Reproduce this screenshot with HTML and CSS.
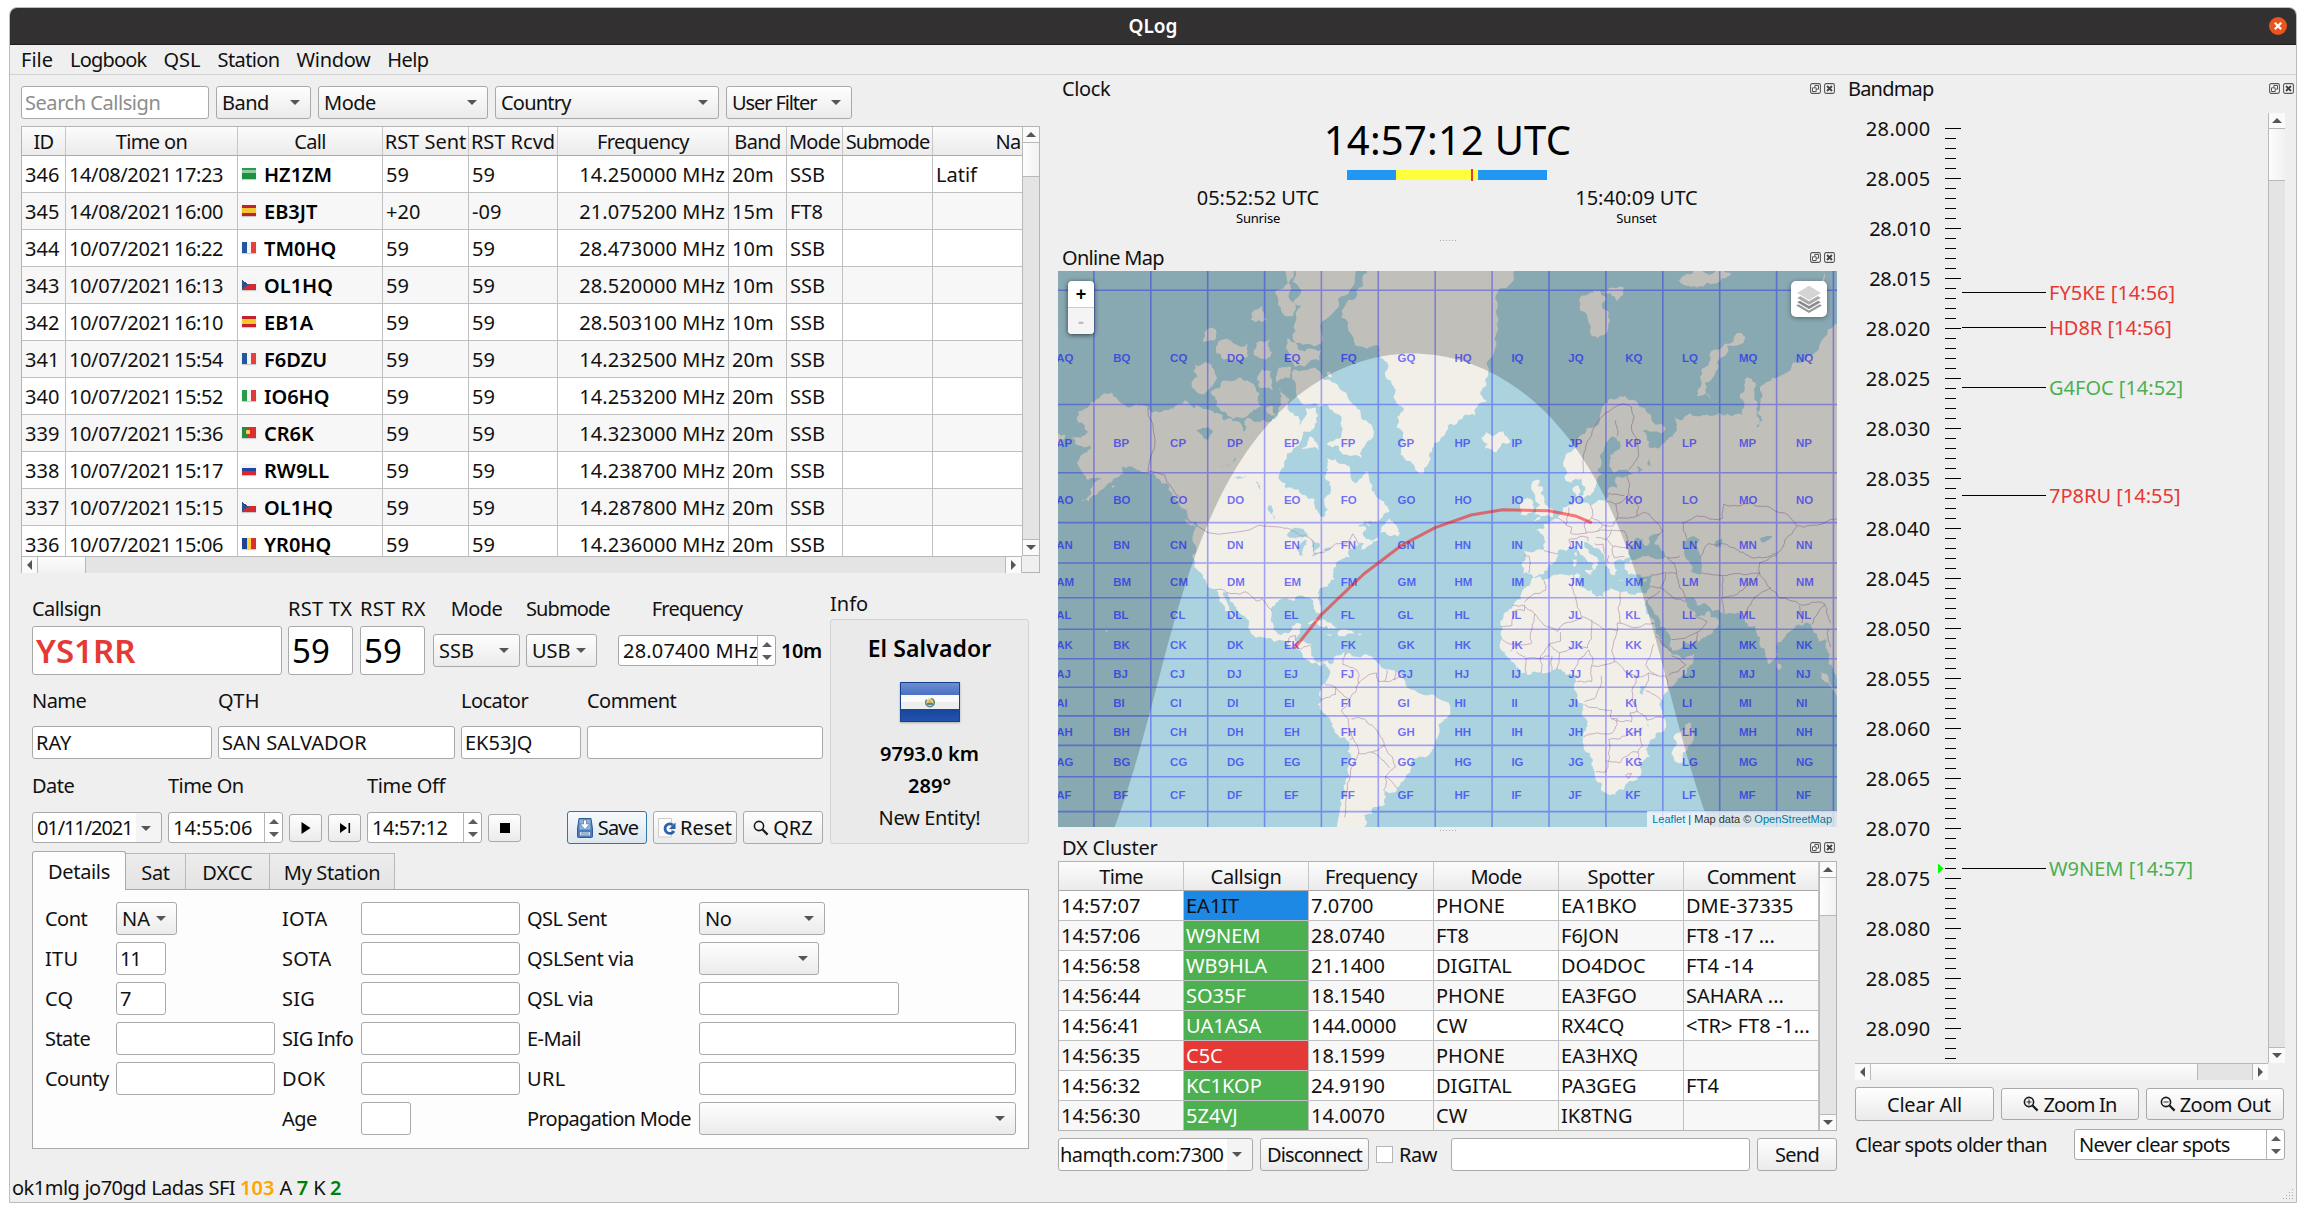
FILE: index.html
```html
<!DOCTYPE html>
<html lang="en">
<head>
<meta charset="utf-8">
<title>QLog</title>
<link rel="stylesheet" href="styles.css">
</head>
<body>
<svg class="defs" width="0" height="0">
  <symbol id="float" viewBox="0 0 11 11"><rect x=".6" y=".6" width="9.8" height="9.8" rx="1.6" fill="#fafafa" stroke="#555" stroke-width="1.1"/><path d="M4.800 2.500h3.700v3.700H6.500M4.800 2.500v2M2.500 4.800h3.700v3.700H2.500z" fill="none" stroke="#555"/></symbol>
  <symbol id="shut" viewBox="0 0 11 11"><rect x=".6" y=".6" width="9.8" height="9.8" rx="1.6" fill="#fafafa" stroke="#555" stroke-width="1.1"/><path d="M3 3l5 5M8 3l-5 5" stroke="#444" stroke-width="2"/></symbol>
  <symbol id="lens" viewBox="0 0 16 16"><circle cx="6" cy="6" r="4.6" fill="none" stroke="#1a1a1a" stroke-width="1.6"/><path d="M9.5 9.5L14.6 14.6" stroke="#1a1a1a" stroke-width="2.2"/></symbol>
</svg>
<div class="window">
  <header class="titlebar"><span>QLog</span>
    <svg class="close" viewBox="0 0 18 18"><circle cx="9" cy="9" r="9" fill="#e95420"/><path d="M5.8 5.8l6.4 6.4M12.2 5.8l-6.4 6.4" stroke="#fff" stroke-width="2.2"/></svg>
  </header>
  <nav class="menubar"><span class="s0">File</span><span class="s8">Logbook</span><span class="s0">QSL</span><span>Station</span><span class="s3">Window</span><span>Help</span></nav>

  <main class="main">
    <section class="left">
      <div class="filters">
        <div class="field hint w188">Search Callsign</div>
        <div class="combo w95">Band</div>
        <div class="combo w170">Mode</div>
        <div class="combo w224 s8">Country</div>
        <div class="combo w126 s11">User Filter</div>
      </div>

      <div class="grid log">
        <div class="view">
          <table>
            <colgroup><col style="width:44px"><col style="width:172px"><col style="width:145px"><col style="width:86px"><col style="width:89px"><col style="width:171px"><col style="width:58px"><col style="width:56px"><col style="width:90px"><col style="width:121px"></colgroup>
            <thead><tr><th>ID</th><th>Time on</th><th>Call</th><th class="s0">RST Sent</th><th class="s0">RST Rcvd</th><th>Frequency</th><th>Band</th><th>Mode</th><th class="s9">Submode</th><th class="cut">Na</th></tr></thead>
            <tbody>
              <tr><td>346</td><td class="dt">14/08/2021 17:23</td><td class="call"><i class="flag sa"></i>HZ1ZM</td><td>59</td><td>59</td><td class="num">14.250000 MHz</td><td>20m</td><td>SSB</td><td></td><td>Latif</td></tr>
              <tr><td>345</td><td class="dt">14/08/2021 16:00</td><td class="call"><i class="flag es"></i>EB3JT</td><td>+20</td><td>-09</td><td class="num">21.075200 MHz</td><td>15m</td><td>FT8</td><td></td><td></td></tr>
              <tr><td>344</td><td class="dt">10/07/2021 16:22</td><td class="call"><i class="flag fr"></i>TM0HQ</td><td>59</td><td>59</td><td class="num">28.473000 MHz</td><td>10m</td><td>SSB</td><td></td><td></td></tr>
              <tr><td>343</td><td class="dt">10/07/2021 16:13</td><td class="call"><i class="flag cz"></i>OL1HQ</td><td>59</td><td>59</td><td class="num">28.520000 MHz</td><td>10m</td><td>SSB</td><td></td><td></td></tr>
              <tr><td>342</td><td class="dt">10/07/2021 16:10</td><td class="call"><i class="flag es"></i>EB1A</td><td>59</td><td>59</td><td class="num">28.503100 MHz</td><td>10m</td><td>SSB</td><td></td><td></td></tr>
              <tr><td>341</td><td class="dt">10/07/2021 15:54</td><td class="call"><i class="flag fr"></i>F6DZU</td><td>59</td><td>59</td><td class="num">14.232500 MHz</td><td>20m</td><td>SSB</td><td></td><td></td></tr>
              <tr><td>340</td><td class="dt">10/07/2021 15:52</td><td class="call"><i class="flag it"></i>IO6HQ</td><td>59</td><td>59</td><td class="num">14.253200 MHz</td><td>20m</td><td>SSB</td><td></td><td></td></tr>
              <tr><td>339</td><td class="dt">10/07/2021 15:36</td><td class="call"><i class="flag pt"></i>CR6K</td><td>59</td><td>59</td><td class="num">14.323000 MHz</td><td>20m</td><td>SSB</td><td></td><td></td></tr>
              <tr><td>338</td><td class="dt">10/07/2021 15:17</td><td class="call"><i class="flag ru"></i>RW9LL</td><td>59</td><td>59</td><td class="num">14.238700 MHz</td><td>20m</td><td>SSB</td><td></td><td></td></tr>
              <tr><td>337</td><td class="dt">10/07/2021 15:15</td><td class="call"><i class="flag cz"></i>OL1HQ</td><td>59</td><td>59</td><td class="num">14.287800 MHz</td><td>20m</td><td>SSB</td><td></td><td></td></tr>
              <tr><td>336</td><td class="dt">10/07/2021 15:06</td><td class="call"><i class="flag ro"></i>YR0HQ</td><td>59</td><td>59</td><td class="num">14.236000 MHz</td><td>20m</td><td>SSB</td><td></td><td></td></tr>
            </tbody>
          </table>
        </div>
        <div class="sb v"><i class="btn up"></i><i class="thumb" style="height:34px"></i><i class="rest"></i><i class="btn down"></i></div>
        <div class="sb h"><i class="btn prev"></i><i class="thumb" style="width:48px"></i><i class="rest"></i><i class="btn next"></i></div>
      </div>

      <div class="contact">
        <div class="entry">
          <div class="row r1">
            <div class="cell w250"><label>Callsign</label><div class="ctl"><div class="field big red">YS1RR</div></div></div>
            <div class="cell w65"><label class="up3">RST TX</label><div class="ctl"><div class="field big">59</div></div></div>
            <div class="cell w65 g7"><label class="up3">RST RX</label><div class="ctl"><div class="field big">59</div></div></div>
            <div class="cell w87 g8 mid"><label>Mode</label><div class="ctl"><div class="combo s0">SSB</div></div></div>
            <div class="cell w86"><label class="s9">Submode</label><div class="ctl"><div class="combo w71 s0">USB</div></div></div>
            <div class="cell w158 mid"><label class="s8">Frequency</label><div class="ctl"><div class="spin freq"><span>28.07400 MHz</span></div></div></div>
            <div class="cell"><label>&nbsp;</label><div class="ctl"><b class="meters">10m</b></div></div>
          </div>
          <div class="row r2">
            <div class="cell w180"><label>Name</label><div class="field">RAY</div></div>
            <div class="cell w237"><label class="up3">QTH</label><div class="field">SAN SALVADOR</div></div>
            <div class="cell w120"><label>Locator</label><div class="field">EK53JQ</div></div>
            <div class="cell w236"><label>Comment</label><div class="field"></div></div>
          </div>
          <div class="row r3">
            <div class="cell w130"><label>Date</label><div class="ctl"><div class="combo white date s11">01/11/2021</div></div></div>
            <div class="cell w193"><label>Time On</label><div class="ctl"><div class="spin time"><span>14:55:06</span></div>
              <button class="mini"><svg width="12" height="12" viewBox="0 0 12 12"><path d="M1.500 0l9 6-9 6z"/></svg></button>
              <button class="mini"><svg width="12" height="12" viewBox="0 0 12 12"><path d="M1 1l7 5-7 5zM9.5 1h1.6v10H9.500z"/></svg></button></div></div>
            <div class="cell w154"><label class="s3">Time Off</label><div class="ctl"><div class="spin time"><span class="s5">14:57:12</span></div>
              <button class="mini"><svg width="12" height="12" viewBox="0 0 12 12"><path d="M1 1h10v10H1z"/></svg></button></div></div>
            <div class="actions">
              <button class="save w80 s8"><svg width="18" height="20" viewBox="0 0 18 20"><path d="M3 .5h12l1.500 10.500v7.500a1 1 0 0 1-1 1h-13a1 1 0 0 1-1-1V11z" fill="#4d7fc0" stroke="#2f5b96"/><rect x="3.500" y="1.500" width="11" height="10" fill="#8fb3de"/><path d="M7.500 2h3v4H14l-5 5.500L4 6h3.500z" fill="#fff" stroke="#51739c" stroke-width=".7"/><rect x="4" y="14" width="10" height="3.500" fill="#dce4ee"/><path d="M6 14v3.500M8 14v3.500M10 14v3.500M12 14v3.500" stroke="#6d87a8"/></svg>Save</button>
              <button class="w84"><svg width="18" height="20" viewBox="0 0 18 20"><path d="M.5.5h13v18.500H.5z" fill="#fbfbfb" stroke="#ccc"/><path d="M15 7a4.800 4.800 0 1 0 1 6" fill="none" stroke="#2d62ab" stroke-width="2.800"/><path d="M17.500 4.500v6.500h-6.500z" fill="#2d62ab"/></svg>Reset</button>
              <button class="w80"><svg width="16" height="16"><use href="#lens"/></svg>QRZ</button>
            </div>
          </div>
        </div>
        <div class="info">
          <label class="s0">Info</label>
          <div class="card">
            <b class="country">El Salvador</b>
            <svg class="sv" width="60" height="40" viewBox="0 0 60 40"><defs><linearGradient id="t" x1="0" y1="0" x2="0" y2="1"><stop offset="0" stop-color="#6f90d4"/><stop offset="1" stop-color="#4a70c2"/></linearGradient><linearGradient id="b" x1="0" y1="0" x2="0" y2="1"><stop offset="0" stop-color="#16459c"/><stop offset="1" stop-color="#2455ae"/></linearGradient></defs><path fill="#eee" d="M0 0h60v40H0z"/><path fill="#fafafa" d="M0 13h60v7H0z"/><path fill="url(#t)" d="M0 0h60v13H0z"/><path fill="url(#b)" d="M0 27h60v13H0z"/><circle cx="30" cy="20.500" r="4.300" fill="#d8d9a0" stroke="#5b8a6b" stroke-width="1.500" stroke-dasharray="19 5" stroke-dashoffset="-21"/><path d="M27.500 22l2.500-5 2.500 5z" fill="#e0a83c"/><path d="M27 22h6" stroke="#3b66b0" stroke-width="1.500"/><path fill="none" stroke="#153f8f" d="M.5.5h59v39H.5z"/></svg>
            <b class="km">9793.0 km</b>
            <b class="deg">289°</b>
            <span class="ent s3">New Entity!</span>
          </div>
        </div>
      </div>

      <div class="tabs"><span class="on">Details</span><span class="t2">Sat</span><span class="t3 s0">DXCC</span><span class="t4">My Station</span></div>
      <div class="pane">
        <label>Cont</label><div class="combo w61 s0">NA</div>
        <label class="up3">IOTA</label><div class="field"></div>
        <label>QSL Sent</label><div class="combo w126">No</div>
        <label class="up3">ITU</label><div class="field w50 s11">11</div>
        <label class="up3">SOTA</label><div class="field"></div>
        <label class="s3">QSLSent via</label><div class="combo w120"></div>
        <label class="up3">CQ</label><div class="field w50">7</div>
        <label class="up3">SIG</label><div class="field"></div>
        <label class="s3">QSL via</label><div class="field w200"></div>
        <label>State</label><div class="field"></div>
        <label>SIG Info</label><div class="field"></div>
        <label>E-Mail</label><div class="field"></div>
        <label>County</label><div class="field"></div>
        <label class="up3">DOK</label><div class="field"></div>
        <label class="up3">URL</label><div class="field"></div>
        <span></span><span></span>
        <label>Age</label><div class="field w50"></div>
        <label class="s7">Propagation Mode</label><div class="combo"></div>
      </div>
    </section>

    <section class="middle">
      <div class="dock"><span class="s3">Clock</span><svg width="11" height="11"><use href="#float"/></svg><svg width="11" height="11"><use href="#shut"/></svg></div>
      <div class="clock">
        <div class="now">14:57:12 UTC</div>
        <div class="daybar"><i class="n" style="width:49px"></i><i class="d" style="width:82px"></i><i class="n" style="width:69px"></i><i class="cursor"></i></div>
        <div class="suns"><div class="sun1"><span>05:52:52 UTC</span><small>Sunrise</small></div><div class="sun2"><span>15:40:09 UTC</span><small>Sunset</small></div></div>
        <i class="grip"></i>
      </div>
      <div class="dock low"><span class="s7">Online Map</span><svg width="11" height="11"><use href="#float"/></svg><svg width="11" height="11"><use href="#shut"/></svg></div>
      <div class="map">
        <svg id="map" width="779" height="556" viewBox="0 0 779 556"></svg>
        <div class="zoomer"><span>+</span><span class="off">-</span></div>
        <div class="layers"><svg width="28" height="28" viewBox="0 0 26 26"><path d="M13 12.500L25 19l-12 7L1 19z" fill="#9a9a9a"/><path d="M13 9l12 7-12 7L1 16z" fill="#8a8a8a" stroke="#fff"/><path d="M13 5l12 7-12 7L1 12z" fill="#aaa" stroke="#fff"/><path d="M13 0l12 7.500-12 7-12-7z" fill="#d4d4d4" stroke="#fff"/></svg></div>
        <div class="credit"><a>Leaflet</a> | Map data © <a>OpenStreetMap</a></div>
      </div>
      <i class="grip g2"></i>
      <div class="dock"><span class="s2">DX Cluster</span><svg width="11" height="11"><use href="#float"/></svg><svg width="11" height="11"><use href="#shut"/></svg></div>
      <div class="grid dx">
        <div class="view">
          <table>
            <colgroup><col style="width:125px"><col style="width:125px"><col style="width:125px"><col style="width:125px"><col style="width:125px"><col style="width:135px"></colgroup>
            <thead><tr><th>Time</th><th class="s3">Callsign</th><th>Frequency</th><th>Mode</th><th class="s3">Spotter</th><th>Comment</th></tr></thead>
            <tbody>
              <tr><td>14:57:07</td><td class="blue">EA1IT</td><td>7.0700</td><td>PHONE</td><td>EA1BKO</td><td>DME-37335</td></tr>
              <tr><td>14:57:06</td><td class="green">W9NEM</td><td>28.0740</td><td>FT8</td><td>F6JON</td><td>FT8 -17 ...</td></tr>
              <tr><td>14:56:58</td><td class="green">WB9HLA</td><td>21.1400</td><td>DIGITAL</td><td>DO4DOC</td><td>FT4 -14</td></tr>
              <tr><td>14:56:44</td><td class="green">SO35F</td><td>18.1540</td><td>PHONE</td><td>EA3FGO</td><td>SAHARA ...</td></tr>
              <tr><td>14:56:41</td><td class="green">UA1ASA</td><td>144.0000</td><td>CW</td><td>RX4CQ</td><td>&lt;TR&gt; FT8 -1...</td></tr>
              <tr><td>14:56:35</td><td class="redbg">C5C</td><td>18.1599</td><td>PHONE</td><td>EA3HXQ</td><td></td></tr>
              <tr><td>14:56:32</td><td class="green">KC1KOP</td><td>24.9190</td><td>DIGITAL</td><td>PA3GEG</td><td>FT4</td></tr>
              <tr><td>14:56:30</td><td class="green">5Z4VJ</td><td>14.0070</td><td>CW</td><td>IK8TNG</td><td></td></tr>
            </tbody>
          </table>
        </div>
        <div class="sb v"><i class="btn up"></i><i class="thumb" style="height:38px"></i><i class="rest"></i><i class="btn down"></i></div>
      </div>
      <div class="server">
        <div class="combo white host w195">hamqth.com:7300</div>
        <button class="w109 s9">Disconnect</button>
        <span class="check"></span><span class="raw s5">Raw</span>
        <div class="field w299"></div>
        <button class="w80 s7 send">Send</button>
      </div>
    </section>

    <section class="right">
      <div class="dock"><span class="s8">Bandmap</span><svg width="11" height="11"><use href="#float"/></svg><svg width="11" height="11"><use href="#shut"/></svg></div>
      <div class="band">
        <svg id="band" width="413" height="950" viewBox="0 0 413 950"></svg>
        <div class="sb v"><i class="btn up"></i><i class="thumb" style="height:52px"></i><i class="rest"></i><i class="btn down"></i></div>
        <div class="sb h"><i class="btn prev"></i><i class="thumb" style="width:327px"></i><i class="rest"></i><i class="btn next"></i></div>
      </div>
      <div class="zoombtns">
        <button class="tall s2">Clear All</button>
        <button class="s8"><svg width="16" height="16" viewBox="0 0 16 16"><use href="#lens"/><path d="M3.500 6h5M6 3.500v5" stroke="#333" stroke-width="1.200"/></svg>Zoom In</button>
        <button class="s5"><svg width="16" height="16" viewBox="0 0 16 16"><use href="#lens"/><path d="M3.500 6h5" stroke="#333" stroke-width="1.200"/></svg>Zoom Out</button>
      </div>
      <div class="older"><span class="s7">Clear spots older than</span><div class="spin never"><span class="s7">Never clear spots</span></div></div>
    </section>
  </main>
  <footer class="status"><span>ok1mlg</span> <span>jo70gd</span> <span>Ladas</span> <span>SFI</span> <b class="or">103</b> <span>A</span> <b class="gr">7</b> <span>K</span> <b class="gr">2</b>
    <svg class="size" width="11" height="11" viewBox="0 0 11 11"><path d="M9 0h1v1H9zM6 3h1v1H6zM9 3h1v1H9zM3 6h1v1H3zM6 6h1v1H6zM9 6h1v1H9zM0 9h1v1H0zM3 9h1v1H3zM6 9h1v1H6zM9 9h1v1H9z" fill="#aaa"/></svg>
  </footer>
</div>
<script src="script.js"></script>
</body>
</html>
```
FILE: styles.css
```css
* { box-sizing: border-box; }
body { margin: 0; background: #fff; font-family: "Noto Sans", "Open Sans", sans-serif; font-size: 20px; line-height: 27px; color: #111; }
.defs { position: absolute; }
i { font-style: normal; display: block; }
svg { display: block; flex: none; }
button { font: inherit; color: inherit; padding: 0; }
b { font-weight: 600; color: #000; }

.window { width: 2288px; height: 1196px; margin: 7px 9px; border: 1px solid #bcbcbc; border-radius: 8px 8px 0 0; background: #efefef; overflow: hidden; display: flex; flex-direction: column; }
.titlebar { height: 37px; flex: none; background: #333031; border-bottom: 1px solid #1f1e1e; color: #fff; font-weight: 600; font-size: 19px; display: flex; align-items: center; justify-content: center; position: relative; }
.close { position: absolute; right: 9px; top: 9px; width: 18px; height: 18px; }
.menubar { height: 30px; flex: none; border-bottom: 1px solid #d3d3d3; padding: 1px 0 0 11px; display: flex; gap: 17px; letter-spacing: -.6px; }

.main { display: flex; height: 1088px; flex: none; }
.left { width: 1048px; padding: 11px 0 0 11px; flex: none; }
.middle { width: 779px; flex: none; }
.right { width: 459px; flex: none; }

.field, .combo, .spin, button { height: 33px; border: 1px solid #a9a9a9; border-radius: 3px; background: #fff; line-height: 31px; white-space: nowrap; overflow: hidden; }
.field { padding-left: 3px; }
.hint { color: #8c8c8c; letter-spacing: -.45px; }
.combo { position: relative; padding-left: 5px; background: linear-gradient(#fefefe, #ebebeb); letter-spacing: -.5px; }
.combo::after { content: ""; position: absolute; right: 10px; top: 13px; border: 5px solid transparent; border-top: 5px solid #555; border-bottom: 0; }
.combo.white { background: linear-gradient(90deg, #fff calc(100% - 25px), #f4f4f4 calc(100% - 25px)); }
button { display: flex; align-items: center; justify-content: center; background: linear-gradient(#fefefe, #ebebeb); gap: 4px; }
.spin { position: relative; height: 31px; line-height: 29px; padding-left: 4px; display: flex; }
.spin span { overflow: hidden; flex: 1; }
.spin::after { content: ""; width: 17px; border-left: 1px solid #b5b5b5; }
.spin::before { content: ""; position: absolute; right: 3px; top: 6px; width: 10px; height: 18px; background: #5c5c5c; clip-path: polygon(50% 0, 100% 28%, 0 28%, 50% 0, 50% 0, 50% 100%, 0 72%, 100% 72%, 50% 100%); }

.w188 { width: 188px; } .w95 { width: 95px; } .w170 { width: 170px; } .w224 { width: 224px; } .w126 { width: 126px; }
.w250 { width: 250px; } .w65 { width: 65px; } .w87 { width: 87px; } .w86 { width: 86px; } .w71 { width: 71px; } .w158 { width: 158px; }
.w180 { width: 180px; } .w237 { width: 237px; } .w120 { width: 120px; } .w236 { width: 236px; } .w130 { width: 130px; } .w193 { width: 193px; }
.w154 { width: 154px; } .w80 { width: 80px; } .w84 { width: 84px; } .w61 { width: 61px; } .w50 { width: 50px; } .w200 { width: 200px; }
.w195 { width: 195px; } .w109 { width: 109px; } .w299 { width: 299px; }

.filters { display: flex; gap: 7px; }

.grid { border: 1px solid #b4b4b4; background: #fff; display: grid; grid-template-columns: 1fr 17px; }
.log { width: 1019px; height: 447px; margin-top: 7px; grid-template-rows: 1fr 17px; background: #efefef; }
.dx { width: 779px; height: 270px; grid-template-rows: 1fr; }
.view { overflow: hidden; min-height: 0; min-width: 0; }
table { border-collapse: separate; border-spacing: 0; table-layout: fixed; width: 100%; }
.log table { width: 1032px; }
.dx table { width: 760px; }
th { height: 29px; padding: 1px 0 0; font-weight: 400; line-height: 27px; background: linear-gradient(#fcfcfc, #ebebeb); border-right: 1px solid #c6c6c6; border-bottom: 1px solid #aaa; white-space: nowrap; letter-spacing: -.65px; }
td { padding: 0 0 0 3px; border-right: 1px solid #c0c0c0; border-bottom: 1px solid #c0c0c0; white-space: nowrap; overflow: hidden; background: #fff; }
.log td { height: 37px; line-height: 34px; padding-top: 2px; }
.dx td { height: 30px; line-height: 29px; padding-left: 2px; }
tr:nth-child(even) td { background: #f7f7f7; }
.log .num { text-align: right; padding-right: 3px; letter-spacing: .1px; }
.dt { letter-spacing: -.38px; word-spacing: -2.5px; }
.cut { padding-left: 30px; }
.call { font-weight: 600; color: #000; }
.flag { display: inline-block; width: 14px; height: 11px; margin: 0 8px 0 1px; vertical-align: 3px; box-shadow: 0 1px 1px #ccc; }
.sa { background: linear-gradient(#2a9a4c 2px, #8fcea0 2px 5px, #1f8f42 5px); }
.es { background: linear-gradient(#c4202c 3px, #f6c630 3px 8px, #c4202c 8px); }
.fr { background: linear-gradient(90deg, #2357a0 5px, #f4f4f4 5px 9px, #e5403c 9px); }
.it { background: linear-gradient(90deg, #2a9a4c 5px, #f4f4f4 5px 9px, #dd3a3a 9px); }
.ro { background: linear-gradient(90deg, #1f3f9a 5px, #f7d33c 5px 9px, #d9302f 9px); }
.pt { background: radial-gradient(circle at 6px 5px, #f3d648 2px, transparent 2.5px), linear-gradient(90deg, #2a8a42 6px, #d9302f 6px); }
.ru { background: linear-gradient(#f4f4f4 4px, #2146a8 4px 7px, #d82a2a 7px); }
.cz { background: conic-gradient(from 238deg at 7px 5.5px, #2c4f8f 64deg, transparent 0), linear-gradient(#f4f4f4 5px, #d22a30 5px); }
.dx tr td.blue { background: #1e88e5; }
.dx tr td.green { background: #4caf50; color: #fff; }
.dx tr td.redbg { background: #e53935; color: #fff; }

.sb { display: flex; background: #e4e4e4; }
.sb.v { flex-direction: column; border-left: 1px solid #b8b8b8; }
.sb.h { border-top: 1px solid #b8b8b8; }
.log .sb.h { border-right: 1px solid #b8b8b8; }
.log .sb.v { border-bottom: 1px solid #b8b8b8; height: 429px; }
.sb .rest { flex: 1; }
.sb .thumb { background: linear-gradient(90deg, #fdfdfd, #f1f1f1); flex: none; }
.sb.v .thumb { border-bottom: 1px solid #b8b8b8; }
.sb.h .thumb { border-right: 1px solid #b8b8b8; background: linear-gradient(#fdfdfd, #f1f1f1); }
.sb .btn { width: 16px; height: 16px; background: #fafafa; display: flex; align-items: center; justify-content: center; flex: none; }
.sb .up { border-bottom: 1px solid #b8b8b8; }
.sb .down { border-top: 1px solid #b8b8b8; }
.sb .prev { border-right: 1px solid #b8b8b8; }
.sb .next { border-left: 1px solid #b8b8b8; }
.btn::after { content: ""; border: 5px solid transparent; }
.up::after { border-top: 0; border-bottom-color: #555; }
.down::after { border-bottom: 0; border-top-color: #555; }
.prev::after { border-left: 0; border-right-color: #555; }
.next::after { border-right: 0; border-left-color: #555; }

.contact { display: flex; padding-left: 11px; height: 278px; }
.entry { width: 798px; padding-top: 22px; }
.row { display: flex; gap: 6px; }
.cell { display: flex; flex-direction: column; }
.mid label { text-align: center; }
.cell label { white-space: nowrap; }
label { letter-spacing: -.55px; }
.ctl { display: flex; align-items: center; gap: 6px; }
.r1 .ctl { height: 49px; margin-top: 4px; }
.r1 .combo:not(.w71), .r1 .big { width: 100%; }
.g7 { margin-left: 1px; } .g8 { margin-left: 2px; }
.big { height: 49px; line-height: 47px; font-size: 33px; color: #000; }
.red { color: #e53935; font-weight: 600; }
.freq { width: 158px; letter-spacing: .2px; }
.meters { margin-left: -1px; letter-spacing: -.4px; }
.r2 { margin-top: 12px; }
.r2 .field { margin-top: 12px; }
.r3 { margin-top: 13px; }
.r3 .ctl { margin-top: 12px; height: 33px; }
.date { width: 130px; height: 31px; line-height: 29px; padding-left: 4px; }
.time { width: 115px; }
.mini { width: 33px; height: 28px; flex: none; }
.actions { display: flex; gap: 6px; align-items: flex-end; margin-left: 40px; }
.save { border-color: #2f77a8; background: linear-gradient(#f6fafd, #dde6ee); }
.info { width: 199px; padding-top: 17px; }
.info label { display: block; padding-left: 0; }
.card { margin-top: 2px; height: 225px; border: 1px solid #d2d2d2; border-radius: 3px; background: #eaeaea; display: flex; flex-direction: column; align-items: center; }
.country { font-size: 23px; margin-top: 15px; letter-spacing: .1px; }
.sv { margin-top: 20px; box-shadow: 0 1px 2px #aaa; }
.km { margin-top: 18px; } .deg, .ent { margin-top: 5px; }

.tabs { display: flex; align-items: flex-end; padding-left: 11px; height: 38px; letter-spacing: -.35px; }
.tabs span { height: 36px; line-height: 37px; text-align: center; border: 1px solid #b9b9b9; border-left: 0; border-bottom: 0; background: linear-gradient(#ececec, #e4e4e4); }
.tabs .on { width: 94px; height: 39px; line-height: 39px; margin-bottom: -1px; background: #fdfdfd; border: 1px solid #a9a9a9; border-bottom: 0; border-radius: 3px 3px 0 0; position: relative; }
.t2 { width: 60px; } .t3 { width: 84px; } .t4 { width: 125px; }
.pane { margin-left: 11px; width: 997px; height: 260px; border: 1px solid #a9a9a9; background: #fdfdfd; padding: 12px; display: grid; grid-template-columns: 71px 166px 79px 166px 172px 317px; grid-template-rows: repeat(6, 33px); row-gap: 7px; align-items: center; }
.pane label { white-space: nowrap; }
.pane > :nth-child(6n+2):not(.w61):not(.w50), .pane > :nth-child(6n+4):not(.w50) { width: 159px; }

.dock { height: 27px; display: flex; align-items: center; gap: 3px; padding: 0 2px 0 4px; letter-spacing: -.5px; }
.dock span { flex: 1; }
.low { height: 28px; padding-top: 1px; }
.clock { height: 141px; padding-top: 11px; position: relative; }
.now { font-size: 40px; line-height: 54px; text-align: center; color: #000; letter-spacing: .2px; }
.daybar { display: flex; width: 200px; height: 10px; margin: 3px 0 0 289px; position: relative; }
.n { background: #2196f3; } .d { background: #ffff3d; }
.cursor { position: absolute; left: 124px; top: -1px; width: 2px; height: 12px; background: #e53935; }
.suns { display: flex; margin-top: 4px; }
.suns div { display: flex; flex-direction: column; align-items: center; width: 400px; }
.suns .sun2 { width: 357px; }
.suns small { font-size: 13px; line-height: 18px; margin-top: -2px; color: #000; letter-spacing: -.2px; }
.grip { width: 17px; height: 1px; background: repeating-linear-gradient(90deg, #aaa 0 1px, transparent 1px 3px); position: absolute; left: 382px; top: 138px; }
.grip.g2 { position: static; margin: 3px 0 3px 382px; }
.map { width: 779px; height: 556px; position: relative; overflow: hidden; }
.zoomer { position: absolute; left: 10px; top: 10px; width: 26px; height: 53px; background: #fff; border-radius: 4px; box-shadow: 0 1px 5px rgba(0,0,0,.65); font: 700 18px/26px "Liberation Sans", Arial, sans-serif; text-align: center; color: #000; overflow: hidden; }
.zoomer span { display: block; height: 27px; border-bottom: 1px solid #ccc; }
.zoomer .off { background: #f4f4f4; color: #bbb; border: 0; line-height: 28px; }
.layers { position: absolute; left: 733px; top: 10px; width: 36px; height: 36px; border-radius: 5px; background: #fff; box-shadow: 0 1px 5px rgba(0,0,0,.4); padding: 4px; }
.credit { position: absolute; right: 0; bottom: 0; height: 16px; padding: 0 5px; background: rgba(255,255,255,.7); font: 11px/16px "Liberation Sans", Arial, sans-serif; color: #333; white-space: nowrap; }
.credit a { color: #0078a8; }
.server { display: flex; margin-top: 7px; align-items: center; }
.host { padding-left: 1px; }
.server button { margin-left: 7px; }
.check { width: 17px; height: 17px; border: 1px solid #b5b5b5; background: #fff; margin-left: 7px; }
.raw { width: 58px; padding: 0 0 0 6px; }

.right .dock { padding: 0 2px 0 11px; }
.band { margin: 11px 0 0 18px; width: 430px; display: grid; grid-template-columns: 413px 17px; grid-template-rows: 950px 17px; }
.zoombtns { display: flex; gap: 7px; margin: 7px 0 0 18px; align-items: center; }
.zoombtns button { width: 138px; height: 32px; }
.zoombtns .tall { width: 139px; height: 34px; }
.older { display: flex; margin: 8px 0 0 18px; align-items: center; width: 430px; justify-content: space-between; }
.never { width: 211px; }

.status { padding-left: 2px; margin-top: 11px; height: 27px; position: relative; letter-spacing: -.5px; word-spacing: .3px; }
.status b { letter-spacing: 0; }
.or { color: #ffa500; } .gr { color: #008000; }
.size { position: absolute; right: 2px; bottom: 1px; }

/* tracking */
.s0 { letter-spacing: 0; } .s2 { letter-spacing: -.2px; } .s3 { letter-spacing: -.35px; } .s5 { letter-spacing: -.5px; }
.s7 { letter-spacing: -.7px; } .s8 { letter-spacing: -.8px; } .s9 { letter-spacing: -.9px; } .s11 { letter-spacing: -1.1px; }
.up3 { letter-spacing: .3px; }
```
FILE: script.js
```js
const NS = 'http://www.w3.org/2000/svg';
function add(parent, name, attrs, text) {
  const e = document.createElementNS(NS, name);
  for (const k in attrs) e.setAttribute(k, attrs[k]);
  if (text !== undefined) e.textContent = text;
  parent.appendChild(e);
  return e;
}

// Web Mercator at zoom 2 (1024 px for the whole world)
const R = 1024 / (2 * Math.PI);
const px = lon => 491 + lon * 1024 / 360;
const py = lat => 416.3 - R * Math.log(Math.tan(Math.PI / 4 + lat * Math.PI / 360));
const parse = s => s.trim().split(/\s+/).map(p => p.split(',').map(Number)).map(([a, b]) => [px(a), py(b)]);

let seed = 7;
const rnd = () => (seed = (seed * 16807) % 2147483647) / 2147483647 - 0.5;
// roughen a coastline by midpoint displacement
function rough(pts, closed, k) {
  const out = [];
  const split = (a, b, d) => {
    const dx = b[0] - a[0], dy = b[1] - a[1], l = Math.hypot(dx, dy);
    if (d === 0 || l < 3) return;
    const r = rnd() * k, m = [(a[0] + b[0]) / 2 - dy * r, (a[1] + b[1]) / 2 + dx * r];
    split(a, m, d - 1); out.push(m); split(m, b, d - 1);
  };
  pts.forEach((p, i) => {
    out.push(p);
    if (i < pts.length - 1) split(p, pts[i + 1], 3);
    else if (closed) split(p, pts[0], 3);
  });
  return 'M' + out.map(p => p[0].toFixed(1) + ' ' + p[1].toFixed(1)).join('L') + (closed ? 'Z' : '');
}

const land = [
  // the Americas
  `-166,68.3 -163,69.5 -161,70.3 -156.5,71.3 -152,70.8 -145,70 -141,69.6 -137,69 -135,69.3 -133,69.5 -129,70 -128,70.5 -125,69.5 -124,70 -120,69.4 -115,68.8 -114,68 -110,67.9 -108,67.4 -107.5,66.5 -107,68 -103,67.8 -98,67.8 -96,68.2 -95.5,69 -94,70 -95,71.9 -92.5,71 -92,69.7 -90,69 -88,68.5 -87.5,67.3 -86,68.3 -85.5,69.6 -82,69.6 -81.3,68.5 -82.5,67 -84,66.4 -86.5,66.4 -87,65.3 -90,64 -93,62 -94.5,60 -94.6,58.7 -92.5,57 -90,57 -87,56 -85,55.3 -82.3,55 -82.2,53 -80.5,51.5 -79,51.3 -79,54.5 -77,56 -76.7,57.5 -78.5,58.8 -77.5,60.5 -78,62.4 -75,62.3 -72,61.5 -70,61 -69.5,58.9 -67.5,58.2 -65.5,59.5 -64.5,60.3 -62.5,58 -61,55.8 -58,54.5 -56,52.5 -58.5,51.3 -60.5,50.2 -65,50.2 -67,49.3 -70,47 -68,48.5 -65,49.2 -64.3,48.3 -65.5,47.5 -64.5,46.2 -62,45.8 -60,46.8 -60,45.8 -63.5,44.5 -66,43.5 -65,45.2 -67,44.8 -70,43.7 -70.7,42.5 -70,41.7 -72,41.2 -74,40.6 -74.8,39 -76,37 -75.6,35.3 -77.5,34.2 -79.5,33 -81.3,31.5 -81.2,29.5 -80,27 -80.3,25.3 -81.2,25.2 -82.6,27.5 -82.8,29 -84.2,30 -86,30.3 -89,30.3 -89.3,29.1 -91.5,29.4 -94,29.6 -96,28.5 -97.3,27.3 -97.5,25 -97.8,22.5 -97,20 -95.5,18.6 -94,18.1 -92,18.6 -90.7,19.5 -90.4,21 -87,21.6 -87.6,19.5 -88.2,18 -88.9,15.9 -86,15.9 -83.2,15 -83.6,12.5 -83.6,11 -82,9 -80,9.2 -78,9.5 -76.8,8 -75.6,10.5 -74.8,11.1 -73,11.4 -71.7,12.4 -71.5,11 -70,12 -68.3,10.8 -66,10.5 -62,10.7 -61,9.5 -60,8.5 -57.5,6.3 -54,5.9 -52,4.8 -50.5,2 -50,0 -48,-0.8 -44.5,-2.5 -40,-2.9 -37,-4.8 -35.2,-5.5 -34.8,-8 -37,-11.2 -38.9,-13.5 -39.2,-17.5 -40.5,-21 -42,-23 -45,-23.8 -48.5,-26 -48.7,-28.5 -51,-31 -53.5,-34 -56,-34.9 -58.2,-34 -57.2,-36 -57.6,-38.1 -62,-39 -62.3,-40.8 -65,-41 -64,-43 -66,-45 -74,-45 -73.8,-41 -73.5,-37 -71.5,-32 -70.6,-27 -70.3,-20 -71.5,-17.5 -76,-14 -78.5,-9.5 -81.2,-6 -80.3,-3.5 -80.8,-2 -80,0.5 -77.5,3.5 -77.8,7 -79.5,8.9 -80.3,7.4 -83,8.3 -85.7,10 -87.5,12.9 -91.5,14 -94,16.2 -96.5,15.7 -101.5,17.6 -105.3,19.8 -105.5,22 -109,25.5 -112.3,29 -114.6,31.6 -112.5,27.5 -109.5,23.1 -112.2,25 -114.5,27.8 -115.8,30.3 -117.2,32.7 -120.5,34.5 -122.4,37.3 -124.3,40.4 -124,44 -124.6,48.3 -122.8,49 -127,51 -130,54.5 -134,58 -138,59 -141,60 -146,60.8 -150,61 -149.5,59.8 -153,59 -156,57.5 -160,55.8 -164.5,54.7 -161,56 -157.5,58.7 -162,58.7 -164,60 -166,61.7 -164.5,63 -161,64 -161,64.8 -166,64.5 -168,65.6 -162,66.4`,
  // Europe, Asia and Africa
  `25,71 31,70.3 41,67 40,66.3 34,66.7 33,66.5 35,64.3 38,64 40.5,64.8 44,66.2 44,68.5 46,68 54,68.7 60,69 61,68.7 68,68.7 67,71 69.5,73 72.5,72.5 72.8,69.5 73,67 75,68 74,70 75,72.2 80,73 86,74.5 95,76 104,77.7 115,77.7 115,8 104,1 101,3 100,6.5 98.4,8 98.7,11 97.5,16.5 95,15.8 94.2,18.5 92,21.5 90,22 87,21.4 85,19.5 82.3,16.7 80.2,15.5 80.2,13 79.8,10.3 77.5,8.1 76,11 74,15 72.8,19 72.7,21 70,21 69,22.3 68,23.7 66.5,25.3 61.5,25.1 57.3,25.8 56.5,27.1 52,27.7 50,30.1 48,30 48.5,28 50.2,26 51.5,25.3 51.3,24.3 54.5,24.3 56.3,26 56.8,24 59.8,22.4 57.7,19 55,17.2 52,15.6 45,12.8 43.4,12.7 42.7,16 39.1,21 37,25 35,28 34.8,29.5 34.2,27.8 32.6,29.9 34,26.5 35.5,24 37.2,21 37.3,19 39.5,15.5 43,12.5 43.3,11.5 51.2,11.8 50.8,9.5 48,4.5 44,1 41.5,-1.7 39.3,-4.7 39.4,-7.5 40.6,-11 40.6,-15 37,-17.8 34.8,-20 35.5,-23.8 32.8,-25.8 32.5,-28.5 30,-31.3 26,-33.9 20,-34.8 18.3,-34 18.2,-31.7 15.5,-27.5 14.4,-22.5 11.8,-17.5 13.6,-12 12.2,-6 9,-1 9.6,2 9.5,3.8 8.5,4.6 6,4.3 4.3,6.3 1,6 -2,4.8 -4,5.2 -7.6,4.4 -11.5,6.9 -13.3,9 -15,11 -16.8,13 -17.4,14.7 -16.3,17 -16.3,20 -17,21 -16,24 -14,26.5 -12.5,28 -10,29.5 -9.6,31.5 -7,33.6 -5.9,35.8 -2,35.1 1,36.5 5,36.8 10,37.3 11,36.8 10.3,34.2 15,32.3 19,30.3 20,32 22,32.8 25,31.6 29,30.9 31.5,31.5 34,31.2 35.8,35 36,36.8 32.5,36.1 30.5,36.8 28,36.8 26.5,38.5 26.5,40 29,41 31.5,41.2 35,42 38,41 41.5,41.6 39,44 37,45 39,47.2 35,46.3 35.5,45.2 33.7,44.4 32.8,45.5 33,46.2 30.8,46.5 28.8,44.5 27.8,42.5 28.5,41.3 26,40.7 23,40.4 24,38 22.8,36.5 21.3,37.5 19.4,41 19.4,41.9 15.5,44 13.7,45.1 12.3,45.3 12.5,44 14.5,42.3 16,41.8 18.4,40 16.8,40.4 16.5,38.5 15.7,38 15.7,40 12.5,41.5 10.3,43.3 8.8,44.4 6,43.1 3.3,43.3 3.2,42 0,39.8 -0.5,38 -2.2,36.8 -5.5,36 -6.5,37 -9,37 -9.3,39 -8.8,43.2 -2,43.4 -1.2,45.5 -2.2,47.2 -4.7,48.3 -1.5,48.7 -1.6,49.7 0.2,49.6 1.7,50.8 4,51.8 5,53.3 8.3,53.7 8.2,57 10.5,57.6 10.3,56 10,54.8 12.5,54.3 14.2,54 18.5,54.8 20,54.7 21,56 21.7,57.4 24,57.2 23.5,59.2 28,59.6 29.8,60 23,60 21.3,61 21.5,63 25,65 22.3,65.8 17.8,62.8 17.2,60.7 18.8,59.8 16.5,57.5 14.5,55.7 12.8,55.5 11.3,59 8,58.1 5.5,59 5,61.8 10,64 13.5,67 19,69.8`,
  // Greenland
  `-73,78.2 -68,76 -60,76 -57,74.5 -54.5,72 -54,70.5 -51,69.5 -53.5,67 -52,64.5 -50,62 -47,60.5 -44,59.9 -42.5,61.5 -40.5,64.8 -37,65.8 -32,68 -26,68.6 -22,70.3 -24,71.5 -21.8,73 -20,75 -18.5,77 -19,79.5 -12,81.5 -20,84 -35,86 -60,84 -64,81 -68,79.5`,
  // Arctic islands
  `-90,73.7 -85,73.7 -81,73.7 -77,72.7 -71,71.2 -67.5,69.5 -62,67 -64,65 -66,62.5 -70,62.8 -74,64.4 -78,64.5 -73.5,65.5 -73,68 -78,70 -84,70 -89,71.5`,
  `-117,70 -113,68.6 -105,69 -101,69.6 -105,72.5 -109,73 -114,72.7 -119,71.5`,
  `-125.5,72 -121,71.3 -117,73.2 -121,74.5 -124.5,74.3`,
  `-90,76.5 -80,76.2 -76,78.5 -70,80 -62,82.4 -64,84.5 -90,84.5 -92,80.5 -87,79`,
  `-92,76.6 -88,75.6 -80,75.6 -80,74.6 -91.5,74.8`,
  `-96,80 -90,81.2 -87,80 -90,78.3 -95,79`,
  `-117,75.3 -111,74.6 -106,75 -106,76.2 -116,76.4`,
  `-104,75.2 -98,75 -98,76.5 -103,76.2`,
  `-102,72 -97,71.7 -97,73.8 -101,73.8`, `-95.5,72.5 -91,73 -90.5,74 -95,74`,
  `-87,64 -81,63.8 -84,65.8`, `-122,76.2 -117,76.6 -118,77.4`, `-105,78 -99,78 -101,79`,
  `-79,73.7 -76.5,73 -77,73.6`, `-99.5,69.4 -96,68.8 -97,69.8`,
  // other islands
  `-59.3,47.7 -56,46.9 -53,46.7 -53,48.5 -56,51.4 -57.5,50.3`,
  `-128,50.8 -125,50 -123.5,48.4 -126,49.3`, `-64.5,49.9 -62,49.2 -63.5,49.3`,
  `-84.9,21.9 -82.5,23.1 -80,23 -75.5,21 -74.2,20.2 -77.6,19.9 -78.3,21.2 -82,22.4`,
  `-74.4,18.4 -73.2,19.9 -69.5,19.6 -68.4,18.6 -71.5,17.7`, `-78.3,18.4 -76.3,18.2 -77.3,17.8`, `-67.2,18.4 -65.7,18.3 -67,18`,
  `-24,65.6 -22,66.4 -20,65.8 -16,66.5 -13.6,65 -18.5,63.4 -22.5,63.9 -21.5,64.6`,
  `11,79.6 18,80 19,78.8 21,78.5 17,76.6 14,77.8`, `18,79.8 26,80.2 24,79.3`, `45,80.6 50,80.2 58,80.4 64,81 52,81.2`,
  `52,71 57,70.7 55,72.5 59,74.5 69,76.7 66,77 57,75.5 53,73`, `91,80 97,80.5 96,81.2`,
  `-5.5,50.1 1.3,51.2 1.7,52.7 0.2,53.2 -1.5,55 -2.2,57.5 -4,57.6 -3.2,58.6 -5,58.6 -6,56.7 -4.8,54.8 -3,54 -4.5,53.2 -5,51.8 -3,51.4`,
  `-10,51.7 -6.2,52.2 -5.6,54.6 -7.5,55.3 -10,54.2`,
  `12.5,38 15.6,38.2 15.1,36.7`, `8.2,41 9.7,41 9.5,39.2 8.5,39`, `8.6,42.5 9.5,43 9.4,41.5`, `23.6,35.5 26.3,35.2 24.8,35`, `32.4,35 34.5,35.6 33.5,34.7`,
  `49.3,-12.1 50.4,-15.5 47.2,-25 45,-25.5 43.3,-22 44.4,-16.3 47.5,-14.8`, `80,9.7 81.8,7.5 80.5,6 79.8,7.5`,
  `95.3,5.6 98,4.2 103,-1 101,-3 98.5,1.5`, `-180,69 -175,67 -170,66 -172.5,64.5 -180,65`,
  `-155.8,20.1 -155,19.4 -155.8,19`, `-153.5,57.8 -152.3,57.6 -154,57`, `11,55.6 12.5,56 12,55`
];
const lakes = [
  `47.5,45.5 51,47 53,46 51,44.5 53.5,41.5 53.8,37 50,37.5 49.3,40.5 47.5,43`, `58.5,45.5 61,46.3 60.5,44 58.6,44`,
  `-92,46.8 -88.5,48.8 -84.7,47 -87.5,46.6`, `-87.8,42 -87.8,44.5 -85,45.9 -86.3,44 -86.5,42`, `-84,46 -80.5,45 -82.2,43.1 -83.5,44.3`,
  `-83.4,41.7 -79,42.8 -81,42.6`, `-79.6,43.3 -76.5,44 -77,43.4`, `-98.8,53.5 -97,51.5 -96.5,50.5 -97.5,53.7`,
  `-116,61.2 -109.5,62.7 -113,61.2`, `-124,66.6 -118,66.5 -120,65.2`, `32,0.3 34,0.3 33,-2.5 31.8,-2`, `31,61.2 33,60.6 31.5,60`, `35,62.5 36,61 34.5,61.5`,
  `34.3,-10 34.9,-14 34.3,-12`, `29.2,-3.5 30,-6 31,-8.5 29.5,-6`, `-103,58.5 -101.5,56.5 -102,58`, `-111,59.2 -106,59.5 -108,59`, `74,46.3 78.5,46.7 75,45.2`
];
const borders = [
  `-123,49 -95,49 -89.5,48 -84.5,46.5 -82.5,45.3 -82.5,42.5 -79,42.8 -76.3,44.2 -75,45 -71.5,45 -69,47.4 -67,45`,
  `-117,32.5 -111,31.3 -106.5,31.8 -103,29 -101,29.7 -97.2,26`, `-141,69.6 -141,60.3 -135,59.5 -130,55.5`, `-92,14.5 -91,17.5 -89,17.8 -89,16`, `-87.5,13 -83.5,15`,
  `-71.7,12 -72.5,8 -67.5,6 -67,1.5 -70,-4 -73,-8 -70.5,-11 -69,-17.5 -67,-23 -70,-30 -71.5,-38 -71.8,-41.5`,
  `-67,1.2 -64,4 -60.5,5 -60,2 -56,2 -52,4.5`, `-57,6 -58,2`, `-54,5.8 -54.5,2.5`, `-79,1.3 -75,0 -75,-2.5 -80,-4.4`, `-75,0 -70,-4`, `-69.5,-11 -65,-11 -60,-16 -58,-20 -62.5,-22.2 -67,-22.5`,
  `-58,-20 -55,-24 -54,-27 -57.5,-30 -58.2,-34`, `-62.5,-22.2 -58,-25 -56,-27.3`, `-57.5,-30 -53.5,-33.5`, `-70,-18.3 -69,-17.5`,
  `-13,27.7 -8.7,27.7 -8.7,26 -12,26 -13,23 -13,21.3 -17,21`, `-8.7,27.5 -5,25 -6,15.5 -12,15 -16.4,16.5`, `-5,25 3,19.2 4.2,21 11.5,24 9.5,30.3 8,33 8.5,36.8`,
  `-1.7,35 -1.2,32.3 -8.7,28.7`, `11.5,24 14.5,23 24,19.5 24,22 25,22 25,31.6`, `25,22 37,22`, `4,19 4,16 0,15 3.5,12 13.5,13.7 15,20 15,23`,
  `24,19.5 22,13 23,9 27.5,5 31,3.7 35.5,5 41,4 42,-1`, `14,13 15.5,10 15,7.5 15,2 9.8,2`, `15,7.5 23,9`, `18.5,4 18,0 16,-4 12.5,-5`, `12.5,-6 16.8,-7 22,-8 22,-11 24,-11 24,-13 22,-16 12,-17.2`,
  `22,-11 29,-12 28.5,-9 31,-8.5 29.3,-4 29.5,0 31,3.7`, `31,-8.5 33,-9.5 34.5,-11.5 40.5,-10.7`, `34,-1 39.3,-4.5`, `34,0 35,5`, `33,-14 30.3,-15.8 25,-17.8 21,-18 21,-22 20,-28.5 16.5,-28.5`,
  `20,-25 25,-25.6 29,-22.2 31.3,-22.3 33,-20 32,-17`, `31.3,-22.3 32,-26.5`, `27,-29.6 29,-29 28,-30.6 27,-29.6`, `3.5,12 2.7,6.3`, `0,15 -3,11 -3,5`, `-8,10 -8,5`, `1,11 1,6`, `8.5,4.7 14,13`, `-11.5,12.5 -8,10 -5.5,10.3 0,11`, `-13.5,12.6 -11.5,15`, `37,15 36,12 34,8 38,4`, `37.5,17.8 43,12.5`, `43,11 48,8 42,4.2`,
  `-1.8,43.3 3,42.4`, `-7,37.2 -7,41.8 -8.8,42`, `7.5,43.8 7,46 10.5,46.6 13.7,46.5 13.7,45.6`, `6,49.4 8,49 7.6,47.6 13,47.6 12.5,50 15,51 14.5,54`, `2.5,51.1 6,49.5 6.2,51 7,53.3`, `15,51 18.8,49.5 17,48 13,47.6`, `18.8,49.5 22.5,49.2 24,51 23.5,54 20,54.5`,
  `17,48 22,48.3 20.3,46.1 16.5,46.5`, `22,48.3 26.5,48 28,45.5`, `20.3,46.1 22.5,44.3 28.5,43.8`, `22.5,44.3 23,41.4 26.5,41.7`, `19.5,42.5 19,44.9 16,45`, `21,42 20.8,40`, `23.5,54 28,56 27.5,59.3`, `24,51 31,51.5 34,52.3 38,50 40,48 38.3,47.1`, `28,56 31.5,53.5 31,51.5`, `21,56.2 26.5,55.8`,
  `12,60 12.2,63 15,66 20,69 25,70 29,69.7`, `24,65.8 23.5,68`, `28,60.5 31.5,63 29,67 29,69.7`, `48.5,46 47,50 52,51.5 61,51 61.5,54 71,54.3 77,53.5 87,49.2 97,50 115,49.8`, `53,41.5 56,45 66,43.5 70,42 80,42.5 87,49`, `53.9,37.3 61,36.5 61,31 61.5,25.3`, `61,36.5 67,37.2 74,37.3 70,34 66,31 61,30`, `74,37.3 78,32.5 81,30 88,27.9 97,28 99,22`, `74,37 74,40 80,42`, `68.5,24 71,28 74.5,31.5 78,33`, `88,27.5 89,22`, `92.3,21.5 93.5,24 97,28`, `44,39.8 45,36 46,33 48,30.2`, `36,36.8 42,37.2 44.8,37.2`, `35.9,33.5 39,33 45,29.5 48,28.7`, `39,33 41,37`, `34.9,29.5 39,32`, `43,16.6 52,19 52,15.8`, `52,19 55.5,22.5 51.5,24.3`, `44,39.8 41.5,41.5 46,41.8`, `98,20 99,14`
];

const map = document.getElementById('map');
add(map, 'rect', { width: 779, height: 556, fill: '#abd3df' });
add(map, 'path', { d: land.map(s => rough(parse(s), true, 0.5)).join(''), fill: '#f2efe9' });
add(map, 'path', { d: lakes.map(s => rough(parse(s), true, 0.4)).join(''), fill: '#abd3df' });
add(map, 'path', { d: borders.map(s => rough(parse(s), false, 0.25)).join(''), fill: 'none', stroke: '#b08fb0', 'stroke-opacity': .75, 'stroke-width': .9 });

// night side for the sun at 14.6 S, 48 W
let night = 'M-30 -30';
for (let lon = -180; lon <= 110; lon += 2) {
  const lat = Math.atan(Math.cos((lon + 48) * Math.PI / 180) / Math.tan(14.7 * Math.PI / 180)) * 180 / Math.PI;
  night += 'L' + px(lon).toFixed(1) + ' ' + py(lat).toFixed(1);
}
add(map, 'path', { d: night + 'L820 -30Z', fill: '#000', 'fill-opacity': .2 });

// Maidenhead fields
let lines = '';
for (let lon = -160; lon <= 100; lon += 20) lines += `M${px(lon).toFixed(1)} 0V556`;
for (let lat = -40; lat <= 80; lat += 10) lines += `M0 ${py(lat).toFixed(1)}H779`;
add(map, 'path', { d: lines, stroke: '#0000ff', 'stroke-opacity': .33, 'stroke-width': 1.6 });
const names = add(map, 'g', { 'font-family': '"Liberation Sans", Arial, sans-serif', 'font-weight': 700, 'font-size': 11.5, fill: '#0000ff', 'fill-opacity': .55 });
for (let i = 0; i < 14; i++)
  for (let j = 5; j < 17; j++)
    add(names, 'text', { x: (px(-180 + i * 20) + 19.3).toFixed(1), y: (py(-85 + j * 10) + 5.2).toFixed(1) }, String.fromCharCode(65 + i, 65 + j));

add(map, 'path', { d: 'M237.4 376.3L262.4 344.7 305.8 303 343 274.7 377.2 256.7 413 244 444.5 238.7 491 239.7 518.5 245.3 532.8 251.3', fill: 'none', stroke: '#ff0000', 'stroke-opacity': .5, 'stroke-width': 3, 'stroke-linejoin': 'round', 'stroke-linecap': 'round' });

// bandmap ruler, 10 px per kHz
const band = document.getElementById('band');
let ticks = '';
for (let k = 0; k <= 93; k++) {
  const y = 15.5 + k * 10;
  ticks += `M90 ${y}h${k % 5 ? 11 : 16}`;
  if (k % 5 === 0) {
    const label = (28 + k / 1000).toFixed(3);
    add(band, 'text', { x: 75.5, y: y + 7.5, 'text-anchor': 'end', fill: '#111', 'letter-spacing': label.includes('1') ? -0.2 : 0.35 }, label);
  }
}
[[179.5, 'FY5KE [14:56]', '#e53935'], [214.5, 'HD8R [14:56]', '#e53935'], [274.5, 'G4FOC [14:52]', '#4caf50'], [382.5, '7P8RU [14:55]', '#e53935'], [755.5, 'W9NEM [14:57]', '#4caf50']].forEach(([y, t, c]) => {
  ticks += `M107 ${y}h84`;
  add(band, 'text', { x: 194, y: y + 7.5, fill: c }, t);
});
add(band, 'path', { d: ticks, stroke: '#000' });
add(band, 'path', { d: 'M83 750.5l5.5 5-5.5 5z', fill: '#00ff00' });
```
